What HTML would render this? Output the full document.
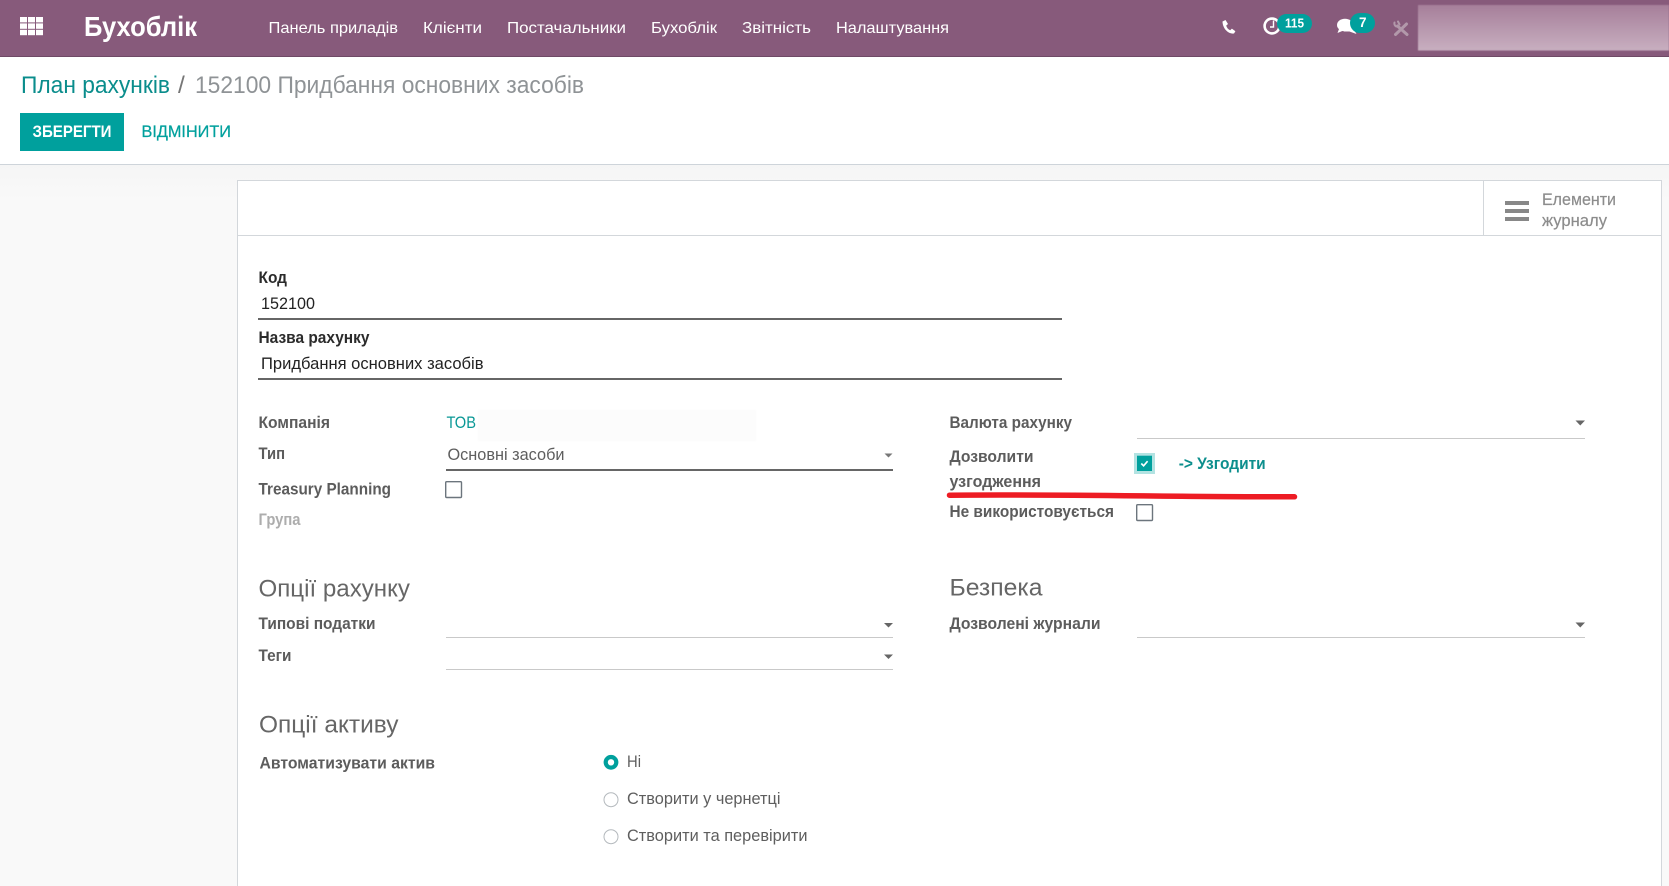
<!DOCTYPE html>
<html lang="uk">
<head>
<meta charset="utf-8">
<title>План рахунків</title>
<style>
html,body{margin:0;padding:0;width:1669px;height:886px;overflow:hidden;background:#fff}
svg{display:block;position:absolute;left:0;top:0;filter:blur(.25px)}
text{font-family:"Liberation Sans","Noto Sans CJK JP",sans-serif;white-space:pre}
.nav{font-size:16px;fill:#fff}
.lb{font-size:16.5px;font-weight:bold;fill:#5c5c5c}
.lk{font-size:16.5px;font-weight:bold;fill:#2b2b2b}
.v{font-size:16.5px;fill:#5e5e5e}
.d{font-size:16.5px;fill:#222}
.h{font-size:24.5px;fill:#666}
</style>
</head>
<body>
<svg width="1669" height="886" viewBox="0 0 1669 886" xmlns="http://www.w3.org/2000/svg">
<defs>
<linearGradient id="g" x1="0" y1="0" x2="0" y2="1"><stop offset="0" stop-color="#a67f9a"/><stop offset="1" stop-color="#c8afc0"/></linearGradient>
<linearGradient id="s" x1="0" y1="0" x2="0" y2="1"><stop offset="0" stop-color="#f5f5f5"/><stop offset=".05" stop-color="#f9f9f9"/></linearGradient>
<filter id="b" x="-5%" y="-10%" width="110%" height="120%"><feGaussianBlur stdDeviation=".6"/></filter>
</defs>

<!-- page background -->
<rect x="0" y="164" width="1669" height="722" fill="url(#s)"/>
<rect x="0" y="164" width="1669" height="1" fill="#ced4da"/>

<!-- navbar -->
<rect x="0" y="0" width="1669" height="56" fill="#875A7B"/>
<rect x="0" y="56" width="1669" height="1" fill="#6f4a66"/>
<g fill="#fff">
<rect x="20" y="17" width="7" height="5.400"/><rect x="28" y="17" width="7" height="5.400"/><rect x="36" y="17" width="7" height="5.400"/>
<rect x="20" y="23.400" width="7" height="5.400"/><rect x="28" y="23.400" width="7" height="5.400"/><rect x="36" y="23.400" width="7" height="5.400"/>
<rect x="20" y="29.800" width="7" height="5.400"/><rect x="28" y="29.800" width="7" height="5.400"/><rect x="36" y="29.800" width="7" height="5.400"/>
</g>
<text x="84" y="36" font-size="27.500" font-weight="bold" fill="#fff" textLength="113" lengthAdjust="spacingAndGlyphs">Бухоблік</text>
<text class="nav" x="268.500" y="33" textLength="129.500" lengthAdjust="spacingAndGlyphs">Панель приладів</text>
<text class="nav" x="423" y="33" textLength="59" lengthAdjust="spacingAndGlyphs">Клієнти</text>
<text class="nav" x="507" y="33" textLength="119" lengthAdjust="spacingAndGlyphs">Постачальники</text>
<text class="nav" x="651" y="33" textLength="66" lengthAdjust="spacingAndGlyphs">Бухоблік</text>
<text class="nav" x="742" y="33" textLength="69" lengthAdjust="spacingAndGlyphs">Звітність</text>
<text class="nav" x="836" y="33" textLength="113" lengthAdjust="spacingAndGlyphs">Налаштування</text>

<!-- phone -->
<path d="M1222.500 21.500l3-1.500 2.500 4-1.800 1.600c.6 2.200 2 3.800 4 4.600l1.700-1.600 3.500 2.600-1.400 2.300c-6.200.8-11.600-5.600-11.500-12.500z" fill="#fff"/>
<!-- clock -->
<circle cx="1272" cy="26" r="7.400" fill="none" stroke="#fff" stroke-width="2.600"/>
<path d="M1273.500 20.500v6.500h-3.500" fill="none" stroke="#fff" stroke-width="1.400"/>
<rect x="1277" y="14" width="35" height="19" rx="9.500" fill="#00A09D"/>
<text x="1285" y="27.500" font-size="12.500" font-weight="bold" fill="#fff" textLength="19" lengthAdjust="spacingAndGlyphs">115</text>
<!-- chat -->
<path d="M1344 28l9 0 3.500 6-7-2.500-5.500 0z" fill="#fff"/>
<ellipse cx="1345" cy="25" rx="8" ry="6.300" fill="#fff"/>
<path d="M1339 29l-1.500 4 6-2.500z" fill="#fff"/>
<rect x="1350" y="13" width="25" height="20" rx="10" fill="#00A09D"/>
<text x="1359" y="27" font-size="13.500" font-weight="bold" fill="#fff">7</text>
<!-- tools: wrench + screwdriver -->
<g fill="none" stroke="#b298aa" stroke-linecap="round">
<path d="M1395.500 34.500l11-10.500" stroke-width="3"/>
<path d="M1397.500 26l9.500 8.500" stroke-width="3"/>
<path d="M1394.500 22.500c-.6 2.600 1.200 4.500 3.500 4M1398 21.500l1.500 3" stroke-width="2"/>
</g>
<!-- blurred user -->
<g filter="url(#b)">
<rect x="1418" y="5" width="251" height="45.500" fill="url(#g)"/>
</g>

<!-- breadcrumb -->
<text x="21" y="93" font-size="24.500" fill="#0a8d8c" textLength="149" lengthAdjust="spacingAndGlyphs">План рахунків</text>
<text x="178" y="93" font-size="24.500" fill="#777">/</text>
<text x="195" y="93" font-size="24.500" fill="#8f9396" textLength="389" lengthAdjust="spacingAndGlyphs">152100 Придбання основних засобів</text>

<!-- buttons -->
<rect x="20" y="113" width="104" height="38" fill="#00A09D"/>
<text x="32.500" y="137" font-size="17" font-weight="bold" fill="#fff" textLength="79" lengthAdjust="spacingAndGlyphs">ЗБЕРЕГТИ</text>
<text x="141.500" y="137" font-size="17" fill="#00A09D" stroke="#00A09D" stroke-width=".25" textLength="89.500" lengthAdjust="spacingAndGlyphs">ВІДМІНИТИ</text>

<!-- sheet -->
<rect x="237.500" y="180.500" width="1424" height="720" fill="#fff" stroke="#d3d7db" stroke-width="1"/>
<rect x="237" y="235" width="1425" height="1" fill="#d3d7db"/>
<rect x="1483" y="181" width="1" height="54" fill="#d3d7db"/>
<rect x="1505" y="201" width="24" height="4" fill="#888"/>
<rect x="1505" y="209" width="24" height="4" fill="#888"/>
<rect x="1505" y="217" width="24" height="4" fill="#888"/>
<text x="1542" y="205" font-size="16.500" fill="#8c8c8c" stroke="#8c8c8c" stroke-width=".2" textLength="74" lengthAdjust="spacingAndGlyphs">Елементи</text>
<text x="1542" y="226" font-size="16.500" fill="#8c8c8c" stroke="#8c8c8c" stroke-width=".2" textLength="65" lengthAdjust="spacingAndGlyphs">журналу</text>

<!-- title fields -->
<text class="lk" x="258.500" y="283" textLength="28.500" lengthAdjust="spacingAndGlyphs">Код</text>
<text class="d" x="261" y="309" textLength="54" lengthAdjust="spacingAndGlyphs">152100</text>
<rect x="258" y="318" width="804" height="2" fill="#666"/>
<text class="lk" x="258.500" y="343" textLength="111" lengthAdjust="spacingAndGlyphs">Назва рахунку</text>
<text class="d" x="261" y="369" textLength="222.500" lengthAdjust="spacingAndGlyphs">Придбання основних засобів</text>
<rect x="258" y="378" width="804" height="2" fill="#666"/>

<!-- left column -->
<text class="lb" x="258.500" y="428" textLength="71.500" lengthAdjust="spacingAndGlyphs">Компанія</text>
<text x="446.500" y="428" font-size="16.500" fill="#0a9896" textLength="29.500" lengthAdjust="spacingAndGlyphs">ТОВ</text>
<g filter="url(#b)"><rect x="478" y="410" width="278" height="31" fill="#fcfcfc"/></g>
<text class="lb" x="258.500" y="459" textLength="26.500" lengthAdjust="spacingAndGlyphs">Тип</text>
<text class="v" x="447.500" y="460" textLength="117" lengthAdjust="spacingAndGlyphs">Основні засоби</text>
<rect x="446" y="469" width="447" height="2" fill="#666"/>
<path d="M884.500 453.500h8l-4 4z" fill="#777"/>
<text class="lb" x="258.500" y="494.500" textLength="132.500" lengthAdjust="spacingAndGlyphs">Treasury Planning</text>
<rect x="445.700" y="481.700" width="15.800" height="15.800" rx="1" fill="#fff" stroke="#6c757d" stroke-width="1.400"/>
<text x="258.500" y="525" font-size="16.500" font-weight="bold" fill="#adadad" textLength="42" lengthAdjust="spacingAndGlyphs">Група</text>

<text class="h" x="258.500" y="596.500" textLength="151.500" lengthAdjust="spacingAndGlyphs">Опції рахунку</text>
<text class="lb" x="258.500" y="629" textLength="117" lengthAdjust="spacingAndGlyphs">Типові податки</text>
<rect x="446" y="637" width="447" height="1" fill="#c9c9c9"/>
<path d="M884 623h9l-4.500 4.500z" fill="#666"/>
<text class="lb" x="258.500" y="661" textLength="33" lengthAdjust="spacingAndGlyphs">Теги</text>
<rect x="446" y="669" width="447" height="1" fill="#c9c9c9"/>
<path d="M884 654.500h9l-4.500 4.500z" fill="#666"/>

<!-- right column -->
<text class="lb" x="949.500" y="428" textLength="122.500" lengthAdjust="spacingAndGlyphs">Валюта рахунку</text>
<rect x="1137" y="438" width="448" height="1" fill="#c9c9c9"/>
<path d="M1575.500 420.500h9.500l-4.750 5z" fill="#666"/>
<text class="lb" x="949.500" y="462" textLength="84" lengthAdjust="spacingAndGlyphs">Дозволити</text>
<text class="lb" x="949.500" y="487" textLength="91.500" lengthAdjust="spacingAndGlyphs">узгодження</text>
<rect x="1134" y="453" width="21" height="21" fill="#b3e3e2"/>
<rect x="1137" y="455.700" width="15" height="15.300" fill="#00A09D"/>
<path d="M1141.300 463.500l2.300 2.300 4-4.600" fill="none" stroke="#fff" stroke-width="1.600"/>
<text x="1178.700" y="469" font-size="16.500" font-weight="bold" fill="#0d8f8d" textLength="87" lengthAdjust="spacingAndGlyphs">-&gt; Узгодити</text>
<path d="M949.500 495.200C1060 494 1180 497 1294.500 496.800" fill="none" stroke="#ed1c24" stroke-width="5.500" stroke-linecap="round"/>
<text class="lb" x="949.500" y="517" textLength="164.500" lengthAdjust="spacingAndGlyphs">Не використовується</text>
<rect x="1136.700" y="504.700" width="15.800" height="15.800" rx="1" fill="#fff" stroke="#6c757d" stroke-width="1.400"/>
<text class="h" x="949.500" y="595.500" textLength="93" lengthAdjust="spacingAndGlyphs">Безпека</text>
<text class="lb" x="949.500" y="629" textLength="151" lengthAdjust="spacingAndGlyphs">Дозволені журнали</text>
<rect x="1137" y="637" width="448" height="1" fill="#c9c9c9"/>
<path d="M1575.500 622.500h9.500l-4.750 5z" fill="#666"/>

<!-- assets -->
<text class="h" x="259" y="732.500" textLength="139.500" lengthAdjust="spacingAndGlyphs">Опції активу</text>
<text class="lb" x="259.500" y="768.500" textLength="175.500" lengthAdjust="spacingAndGlyphs">Автоматизувати актив</text>
<circle cx="611" cy="762.300" r="5.300" fill="#fff" stroke="#00A09D" stroke-width="4.200"/>
<text class="v" x="627" y="767" textLength="14" lengthAdjust="spacingAndGlyphs">Ні</text>
<circle cx="611" cy="799.700" r="7" fill="#fff" stroke="#b4b9bd" stroke-width="1"/>
<text class="v" x="627" y="804" textLength="153.500" lengthAdjust="spacingAndGlyphs">Створити у чернетці</text>
<circle cx="611" cy="836.700" r="7" fill="#fff" stroke="#b4b9bd" stroke-width="1"/>
<text class="v" x="627" y="841" textLength="180.500" lengthAdjust="spacingAndGlyphs">Створити та перевірити</text>
</svg>
</body>
</html>
